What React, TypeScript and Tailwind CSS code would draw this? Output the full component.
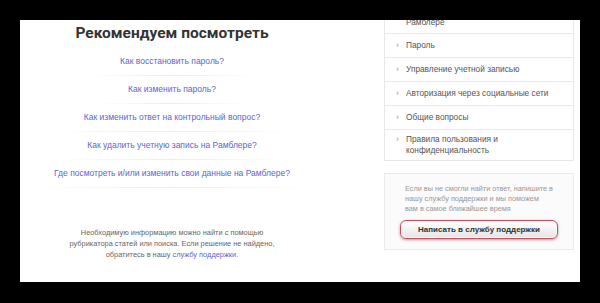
import React from "react"

const LINKS = [
  { text: "Как восстановить пароль?", w: "w-[167px]" },
  { text: "Как изменить пароль?", w: "w-[147px]" },
  { text: "Как изменить ответ на контрольный вопрос?", w: "w-[233px]" },
  { text: "Как удалить учетную запись на Рамблере?", w: "w-[227px]" },
  { text: "Где посмотреть и/или изменить свои данные на Рамблере?", w: "w-[273px]" },
]

const MENU = [
  "Пароль",
  "Управление учетной записью",
  "Авторизация через социальные сети",
  "Общие вопросы",
]

function Chevron() {
  return <span className="w-[9px] shrink-0 text-[9px] leading-[11px] text-[#999]">›</span>
}

export default function App() {
  return (
    <div className="h-[303px] w-[600px] overflow-hidden bg-black pl-5 pt-5 font-['Liberation_Sans',Arial,sans-serif]">
      <div className="flex h-[262px] w-[560px] overflow-hidden bg-white">
        {/* ── Рекомендуем ── */}
        <div className="flex w-[304px] shrink-0 flex-col items-center">
          <h2 className="h-[28px] font-['Roboto',Arial,sans-serif] text-[15.5px] font-bold leading-[26px] text-[#333]">
            Рекомендуем посмотреть
          </h2>
          {LINKS.map(l => (
            <div key={l.text} className="flex flex-col items-center">
              <div className="flex h-[27px] items-center text-[8.5px] text-[#5a66d0]">{l.text}</div>
              <div className={`h-px ${l.w} bg-gradient-to-r from-transparent via-[#ececec] to-transparent`} />
            </div>
          ))}
          <p className="mt-[39px] whitespace-nowrap text-center text-[7.4px] leading-[11px] text-[#666]">
            Необходимую информацию можно найти с помощью
            <br />
            рубрикатора статей или поиска. Если решение не найдено,
            <br />
            обратитесь в нашу <span className="text-[#5a66d0]">службу поддержки</span>.
          </p>
        </div>

        <div className="w-[60px] shrink-0" />

        {/* ── Меню ── */}
        <div className="flex w-[190px] shrink-0 flex-col">
          <div className="-mt-[15px] border-x border-b border-[#e8e8e8] text-[8.3px] text-[#555]">
            <div className="flex px-[11px] pb-[5px] pt-[1px] leading-[11px]">
              <span className="w-[10px] shrink-0" />
              <span>
                Личные данные на
                <br />
                Рамблере
              </span>
            </div>
            {MENU.map(m => (
              <div key={m} className="flex h-[24px] items-center border-t border-[#ebebeb] px-[11px] leading-[11px]">
                <Chevron />
                <span className="pl-px">{m}</span>
              </div>
            ))}
            <div className="flex border-t border-[#ebebeb] px-[11px] py-[4px] leading-[11px]">
              <Chevron />
              <span className="pl-px">
                Правила пользования и
                <br />
                конфиденциальность
              </span>
            </div>
          </div>

          <div className="mt-[12px] border border-[#ebebeb] bg-[#fbfbfb] px-[15px] pb-[10px] pt-[10px]">
            <p className="whitespace-nowrap pl-[5px] text-[7.3px] leading-[10px] text-[#999]">
              Если вы не смогли найти ответ, напишите в
              <br />
              нашу службу поддержки и мы поможем
              <br />
              вам в самое ближайшее время
            </p>
            <div className="mt-[6px] rounded-[6px] border-[1.5px] border-[#d24a5a] p-px shadow-[0_1px_3px_rgba(0,0,0,0.35)]">
              <button className="flex h-[15px] w-full items-center justify-center rounded-[4px] bg-gradient-to-b from-[#ffffff] to-[#e6e6e6] text-[8px] font-bold text-[#333]">
                Написать в службу поддержки
              </button>
            </div>
          </div>
        </div>
      </div>
    </div>
  )
}
